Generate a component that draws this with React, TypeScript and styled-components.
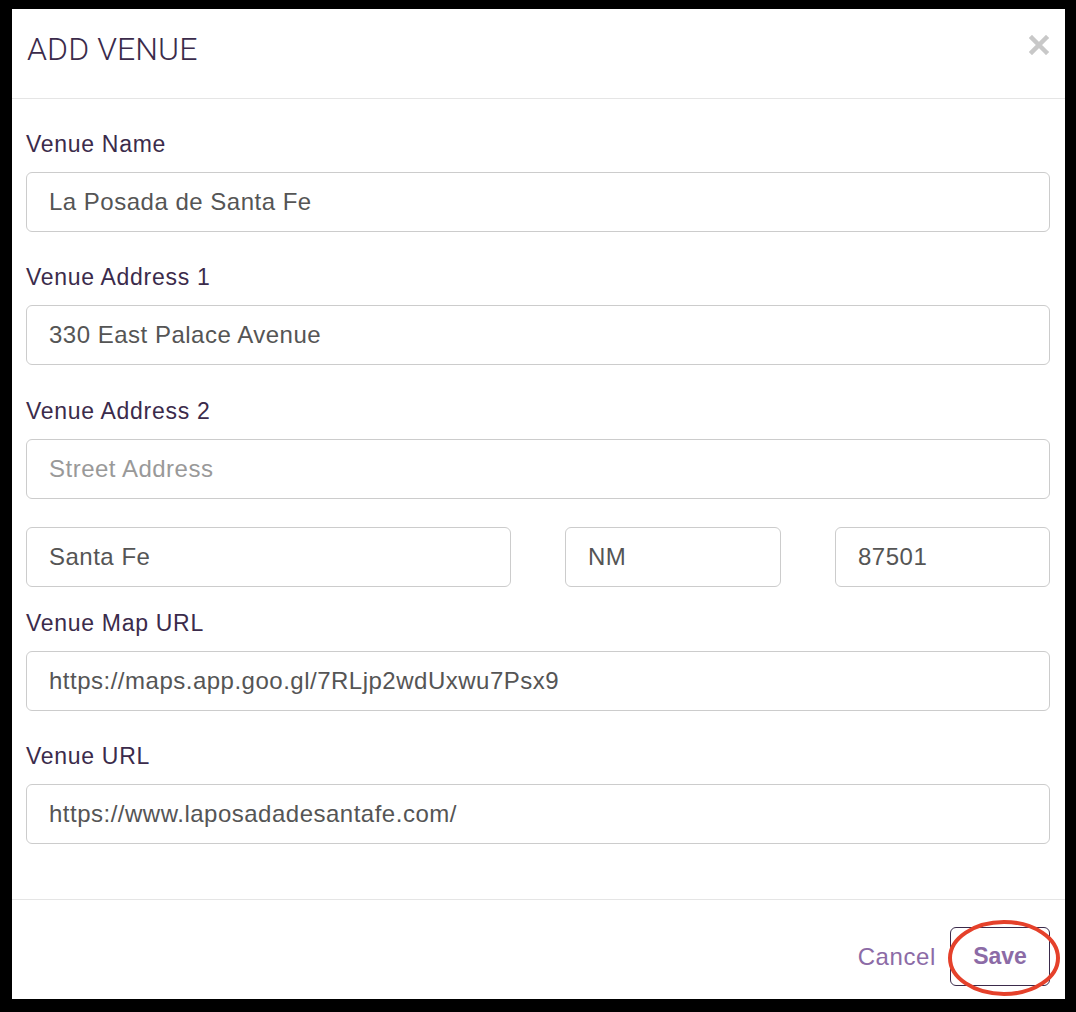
import React from "react";
import styled, { createGlobalStyle } from "styled-components";

const GlobalStyle = createGlobalStyle`
  html, body {
    margin: 0;
    padding: 0;
    background: #000;
  }
  body {
    font-family: "Liberation Sans", Arial, sans-serif;
  }
`;

const Frame = styled.div`
  padding: 9px 11px 13px 12px;
  background: #000;
`;

const Dialog = styled.div`
  background: #fff;
  height: 990px;
  display: flex;
  flex-direction: column;
`;

const Header = styled.div`
  height: 90px;
  box-sizing: border-box;
  border-bottom: 1px solid #e5e5e5;
  display: flex;
  align-items: center;
  justify-content: space-between;
  padding: 0 16px 10px 15px;
`;

const Title = styled.h4`
  margin: 0;
  font-family: "Roboto", "Liberation Sans", sans-serif;
  font-weight: 300;
  font-size: 32px;
  color: #3b2b4b;
  letter-spacing: 0.1px;
`;

const CloseButton = styled.button`
  border: 0;
  background: none;
  padding: 0;
  margin-top: -7px;
  cursor: pointer;
  display: flex;
`;

const Body = styled.div`
  flex: 1;
  padding: 31px 15px 0 14px;
`;

const Group = styled.div<{ $gap?: number }>`
  margin-bottom: ${(p) => p.$gap ?? 31}px;
`;

const Label = styled.label`
  display: block;
  font-size: 23px;
  line-height: 28px;
  letter-spacing: 0.7px;
  color: #3b2b4b;
  margin-bottom: 14px;
`;

const Input = styled.input`
  display: block;
  width: 100%;
  box-sizing: border-box;
  height: 60px;
  padding: 0 22px;
  border: 1px solid #cccccc;
  border-radius: 6px;
  font-family: "Liberation Sans", Arial, sans-serif;
  font-size: 24px;
  letter-spacing: 0.5px;
  color: #555;
  background: #fff;
  outline: none;

  &::placeholder {
    color: #999;
  }
`;

const Row = styled.div`
  display: grid;
  grid-template-columns: 485px 216px 1fr;
  column-gap: 54px;
  margin-bottom: 22px;
`;

const Footer = styled.div`
  border-top: 1px solid #e5e5e5;
  height: 100px;
  box-sizing: border-box;
  display: flex;
  justify-content: flex-end;
  align-items: flex-start;
  padding: 27px 15px 0 0;
  gap: 14px;
`;

const TextButton = styled.button<{ $primary?: boolean }>`
  position: relative;
  height: 59px;
  padding: 0 ${(p) => (p.$primary ? 22 : 0)}px;
  min-width: ${(p) => (p.$primary ? 100 : 0)}px;
  border: ${(p) => (p.$primary ? "1px solid #3b2b4b" : "0")};
  border-radius: 6px;
  background: #fff;
  font-family: "Liberation Sans", Arial, sans-serif;
  font-size: ${(p) => (p.$primary ? 23 : 24)}px;
  font-weight: ${(p) => (p.$primary ? 700 : 400)};
  letter-spacing: ${(p) => (p.$primary ? 0 : 0.6)}px;
  color: #8c6ba6;
  cursor: pointer;
`;

const Annotation = styled.svg`
  position: absolute;
  left: -5px;
  top: -10px;
  pointer-events: none;
`;

const CloseIcon = () => (
  <svg width="20" height="20" viewBox="0 0 20 20">
    <path d="M3 3 L17 17 M17 3 L3 17" stroke="#c8c8c8" strokeWidth="4.5" strokeLinecap="square" />
  </svg>
);

export default function App() {
  return (
    <>
      <GlobalStyle />
      <Frame>
        <Dialog>
          <Header>
            <Title>ADD VENUE</Title>
            <CloseButton aria-label="Close">
              <CloseIcon />
            </CloseButton>
          </Header>
          <Body>
            <Group>
              <Label>Venue Name</Label>
              <Input defaultValue="La Posada de Santa Fe" />
            </Group>
            <Group $gap={32}>
              <Label>Venue Address 1</Label>
              <Input defaultValue="330 East Palace Avenue" />
            </Group>
            <Group $gap={28}>
              <Label>Venue Address 2</Label>
              <Input placeholder="Street Address" />
            </Group>
            <Row>
              <Input defaultValue="Santa Fe" />
              <Input defaultValue="NM" />
              <Input defaultValue="87501" />
            </Row>
            <Group>
              <Label>Venue Map URL</Label>
              <Input defaultValue="https://maps.app.goo.gl/7RLjp2wdUxwu7Psx9" />
            </Group>
            <Group>
              <Label>Venue URL</Label>
              <Input defaultValue="https://www.laposadadesantafe.com/" />
            </Group>
          </Body>
          <Footer>
            <TextButton>Cancel</TextButton>
            <TextButton $primary>
              Save
              <Annotation width="118" height="80" viewBox="0 0 118 80">
                <ellipse cx="58" cy="40" rx="54" ry="36" fill="none" stroke="#e5412b" strokeWidth="4" />
              </Annotation>
            </TextButton>
          </Footer>
        </Dialog>
      </Frame>
    </>
  );
}
